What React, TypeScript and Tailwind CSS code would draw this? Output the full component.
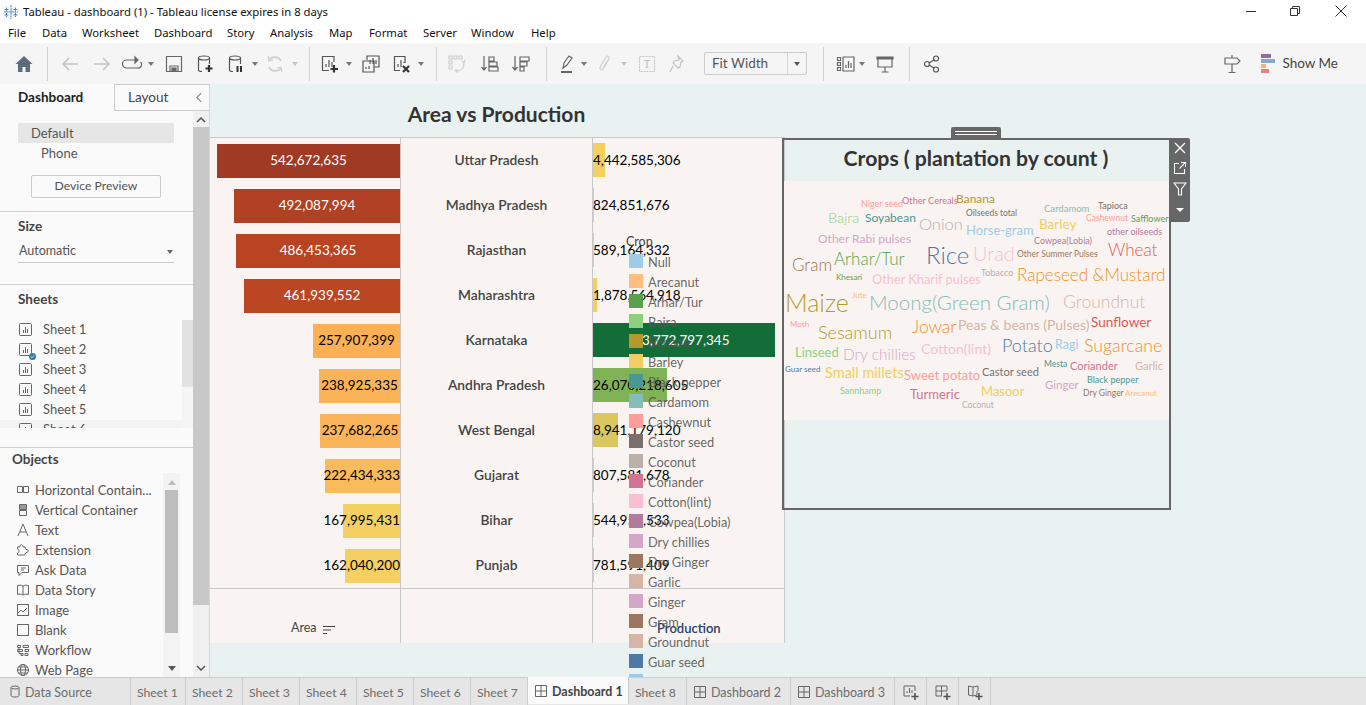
import type { ReactNode } from 'react';

const menu = [
  ['File', 'w-[34px]'],
  ['Data', 'w-[40px]'],
  ['Worksheet', 'w-[72px]'],
  ['Dashboard', 'w-[73px]'],
  ['Story', 'w-[43px]'],
  ['Analysis', 'w-[59px]'],
  ['Map', 'w-[40px]'],
  ['Format', 'w-[54px]'],
  ['Server', 'w-[48px]'],
  ['Window', 'w-[60px]'],
  ['Help', 'w-[40px]'],
];

const rows = [
  { state: 'Uttar Pradesh', area: '542,672,635', areaW: 183, areaC: 'bg-[#a03a24] text-white justify-center', prod: '4,442,585,306', prodW: 12, prodC: 'bg-[#f4d061]', prodT: 'text-black' },
  { state: 'Madhya Pradesh', area: '492,087,994', areaW: 166, areaC: 'bg-[#b14124] text-white justify-center', prod: '824,851,676', prodW: 1, prodC: 'bg-[#f4d061]', prodT: 'text-black' },
  { state: 'Rajasthan', area: '486,453,365', areaW: 164, areaC: 'bg-[#b84423] text-white justify-center', prod: '589,164,332', prodW: 1, prodC: 'bg-[#f4d061]', prodT: 'text-black' },
  { state: 'Maharashtra', area: '461,939,552', areaW: 156, areaC: 'bg-[#bb4623] text-white justify-center', prod: '1,878,564,918', prodW: 4, prodC: 'bg-[#f4d061]', prodT: 'text-black' },
  { state: 'Karnataka', area: '257,907,399', areaW: 87, areaC: 'bg-[#fbb055] text-black justify-center', prod: '3,772,797,345', prodW: 182, prodC: 'bg-[#136d39]', prodT: 'text-white pl-[49px]' },
  { state: 'Andhra Pradesh', area: '238,925,335', areaW: 81, areaC: 'bg-[#fbb357] text-black justify-center', prod: '26,070,218,605', prodW: 74, prodC: 'bg-[#7fb356]', prodT: 'text-black' },
  { state: 'West Bengal', area: '237,682,265', areaW: 80, areaC: 'bg-[#fbb459] text-black justify-center', prod: '8,941,179,120', prodW: 25, prodC: 'bg-[#dbc75f]', prodT: 'text-black' },
  { state: 'Gujarat', area: '222,434,333', areaW: 75, areaC: 'bg-[#f9bb5c] text-black justify-end', prod: '807,581,678', prodW: 1, prodC: 'bg-[#f4d061]', prodT: 'text-black' },
  { state: 'Bihar', area: '167,995,431', areaW: 57, areaC: 'bg-[#f4cf62] text-black justify-end', prod: '544,957,533', prodW: 1, prodC: 'bg-[#f4d061]', prodT: 'text-black' },
  { state: 'Punjab', area: '162,040,200', areaW: 55, areaC: 'bg-[#f4d063] text-black justify-end', prod: '781,591,409', prodW: 1, prodC: 'bg-[#f4d061]', prodT: 'text-black' },
];

const legend = [
  ['Null', 'bg-[#a0cbe8]'],
  ['Arecanut', 'bg-[#ffbe7d]'],
  ['Arhar/Tur', 'bg-[#59a14f]'],
  ['Bajra', 'bg-[#8cd17d]'],
  ['Banana', 'bg-[#b6992d]'],
  ['Barley', 'bg-[#f1ce63]'],
  ['Black pepper', 'bg-[#499894]'],
  ['Cardamom', 'bg-[#86bcb6]'],
  ['Cashewnut', 'bg-[#ff9d9a]'],
  ['Castor seed', 'bg-[#79706e]'],
  ['Coconut', 'bg-[#bab0ac]'],
  ['Coriander', 'bg-[#d37295]'],
  ['Cotton(lint)', 'bg-[#fabfd2]'],
  ['Cowpea(Lobia)', 'bg-[#b07aa1]'],
  ['Dry chillies', 'bg-[#d4a6c8]'],
  ['Dry Ginger', 'bg-[#9d7660]'],
  ['Garlic', 'bg-[#d7b5a6]'],
  ['Ginger', 'bg-[#d4a6c8]'],
  ['Gram', 'bg-[#9d7660]'],
  ['Groundnut', 'bg-[#d7b5a6]'],
  ['Guar seed', 'bg-[#4e79a7]'],
  ['', 'bg-[#a0cbe8]'],
];

const words = [
  ['Niger seed', 'left-[77px] top-[22px] text-[9px] text-[#ff9d9a]'],
  ['Other Cereals', 'left-[118px] top-[20px] text-[9.2px] text-[#d37295]'],
  ['Banana', 'left-[172px] top-[18px] text-[12px] text-[#b6992d]'],
  ['Oilseeds total', 'left-[182px] top-[32px] text-[8.5px] text-[#79706e]'],
  ['Tapioca', 'left-[314px] top-[24px] text-[9px] text-[#79706e]'],
  ['Cardamom', 'left-[260px] top-[28px] text-[9.5px] text-[#86bcb6]'],
  ['Bajra', 'left-[44px] top-[37px] text-[14.5px] font-light text-[#8cd17d]'],
  ['Soyabean', 'left-[81px] top-[37px] text-[12px] text-[#499894]'],
  ['Onion', 'left-[135px] top-[43px] text-[16.5px] font-light text-[#bab0ac]'],
  ['Horse-gram', 'left-[182px] top-[49px] text-[13px] text-[#a0cbe8]'],
  ['Barley', 'left-[255px] top-[44px] text-[13.5px] text-[#f1ce63]'],
  ['Cashewnut', 'left-[302px] top-[37px] text-[8.5px] text-[#ff9d9a]'],
  ['Safflower', 'left-[347px] top-[37px] text-[9px] text-[#59a14f]'],
  ['other oilseeds', 'left-[323px] top-[50px] text-[9px] text-[#b07aa1]'],
  ['Other Rabi pulses', 'left-[34px] top-[58px] text-[12px] text-[#d4a6c8]'],
  ['Cowpea(Lobia)', 'left-[250px] top-[59px] text-[9px] text-[#b07aa1]'],
  ['Arhar/Tur', 'left-[50px] top-[77px] text-[17px] font-light text-[#59a14f]'],
  ['Gram', 'left-[8px] top-[83px] text-[17px] font-light text-[#9d7660]'],
  ['Rice', 'left-[142px] top-[74px] text-[24px] font-light text-[#4e79a7]'],
  ['Urad', 'left-[189px] top-[72px] text-[20px] font-light text-[#fabfd2]'],
  ['Other Summer Pulses', 'left-[233px] top-[73px] text-[8.5px] text-[#9d7660]'],
  ['Wheat', 'left-[324px] top-[68px] text-[17px] font-light text-[#e15759]'],
  ['Tobacco', 'left-[197px] top-[91px] text-[9px] text-[#bab0ac]'],
  ['Rapeseed &Mustard', 'left-[233px] top-[93px] text-[17px] font-light text-[#f28e2b]'],
  ['Khesari', 'left-[52px] top-[96px] text-[8px] text-[#59a14f]'],
  ['Other Kharif pulses', 'left-[88px] top-[98px] text-[12.8px] text-[#fabfd2]'],
  ['Maize', 'left-[1px] top-[121px] text-[25px] font-light text-[#b6992d]'],
  ['Jute', 'left-[68px] top-[114px] text-[8px] text-[#ffbe7d]'],
  ['Moong(Green Gram)', 'left-[85px] top-[121px] text-[20.5px] font-light text-[#86bcb6]'],
  ['Groundnut', 'left-[279px] top-[121px] text-[17.5px] font-light text-[#d7b5a6]'],
  ['Moth', 'left-[6px] top-[143px] text-[8px] text-[#ff9d9a]'],
  ['Sesamum', 'left-[34px] top-[151px] text-[18px] font-light text-[#b6992d]'],
  ['Jowar', 'left-[128px] top-[146px] text-[17.5px] font-light text-[#f28e2b]'],
  ['Peas & beans (Pulses)', 'left-[174px] top-[144px] text-[14px] text-[#d7b5a6]'],
  ['Sunflower', 'left-[307px] top-[142px] text-[13.5px] text-[#e15759]'],
  ['Linseed', 'left-[11px] top-[171px] text-[13px] text-[#8cd17d]'],
  ['Dry chillies', 'left-[59px] top-[174px] text-[15.5px] font-light text-[#d4a6c8]'],
  ['Cotton(lint)', 'left-[137px] top-[168px] text-[14.2px] text-[#fabfd2]'],
  ['Potato', 'left-[218px] top-[164px] text-[18px] font-light text-[#4e79a7]'],
  ['Ragi', 'left-[271px] top-[164px] text-[12.5px] text-[#a0cbe8]'],
  ['Sugarcane', 'left-[300px] top-[165px] text-[17.7px] font-light text-[#f28e2b]'],
  ['Guar seed', 'left-[1px] top-[188px] text-[8px] text-[#4e79a7]'],
  ['Mesta', 'left-[260px] top-[183px] text-[8.5px] text-[#499894]'],
  ['Coriander', 'left-[286px] top-[184px] text-[11px] text-[#d37295]'],
  ['Garlic', 'left-[351px] top-[184px] text-[11px] text-[#d7b5a6]'],
  ['Small millets', 'left-[41px] top-[192px] text-[14.5px] text-[#f1ce63]'],
  ['Sweet potato', 'left-[120px] top-[194px] text-[13px] text-[#ff9d9a]'],
  ['Castor seed', 'left-[198px] top-[190px] text-[11px] text-[#79706e]'],
  ['Black pepper', 'left-[303px] top-[198px] text-[9px] text-[#499894]'],
  ['Sannhamp', 'left-[56px] top-[209px] text-[9px] text-[#8cd17d]'],
  ['Turmeric', 'left-[126px] top-[213px] text-[13px] text-[#d37295]'],
  ['Masoor', 'left-[197px] top-[210px] text-[13px] text-[#f1ce63]'],
  ['Ginger', 'left-[261px] top-[204px] text-[11.5px] text-[#d4a6c8]'],
  ['Dry Ginger', 'left-[299px] top-[212px] text-[8.5px] text-[#9d7660]'],
  ['Arecanut', 'left-[341px] top-[212px] text-[8px] text-[#ffbe7d]'],
  ['Coconut', 'left-[178px] top-[224px] text-[8.5px] text-[#bab0ac]'],
];

function Svg({ children, className = '' }: { children: ReactNode; className?: string }) {
  return (
    <svg viewBox="0 0 20 20" fill="none" stroke="currentColor" strokeWidth="1.2" className={`h-5 w-5 shrink-0 ${className}`}>
      {children}
    </svg>
  );
}

function Caret({ className }: { className: string }) {
  return <span className={`h-0 w-0 shrink-0 border-x-[3px] border-t-[4px] border-x-transparent ${className}`} />;
}

function Sep({ className }: { className: string }) {
  return <span className={`h-[34px] w-px shrink-0 bg-[#d4d4d4] ${className}`} />;
}

function ChartIcon({ className = '', check = false }: { className?: string; check?: boolean }) {
  return (
    <span className={`relative shrink-0 ${className}`}>
      <svg viewBox="0 0 14 14" fill="none" className="h-[14px] w-[14px]" stroke="#666">
        <rect x="0.5" y="0.5" width="12" height="12" rx="1" />
        <path d="M4.5 10V7M6.5 10V4M8.5 10V6" />
      </svg>
      {check && (
        <svg viewBox="0 0 7 7" className="absolute -bottom-[3px] -right-[3px] h-[7px] w-[7px]">
          <circle cx="3.5" cy="3.5" r="3.5" fill="#2f7ea8" />
          <path d="m1.800 3.500 1.200 1.200 2-2.200" fill="none" stroke="#fff" strokeWidth="0.800" />
        </svg>
      )}
    </span>
  );
}

function ObjectIcon({ name }: { name: string }) {
  const c = 'h-[14px] w-[14px] shrink-0';
  if (name === 'h') return <svg viewBox="0 0 14 14" fill="none" stroke="#666" className={c}><path d="M1.5 3.5h5v6h-5zM7.5 3.5h5v6h-5z" /></svg>;
  if (name === 'v') return <svg viewBox="0 0 14 14" fill="none" stroke="#666" className={c}><path d="M3.5 1.5h7v5h-7zM3.5 7.5h7v5h-7z" /><path d="M4 2h6v4H4z" fill="#999" stroke="none" /></svg>;
  if (name === 't') return <svg viewBox="0 0 14 14" fill="none" stroke="#666" className={c}><path d="M2 13 7 1l5 12M4 9h6" /></svg>;
  if (name === 'e') return <svg viewBox="0 0 14 14" fill="none" stroke="#666" className={c}><path d="M1.5 6V4h2.5c-.5-3 3-3 3 0H9l1 2.500c3 0 3 3 0 3l-1.500 2.500h-7V10c2 0 2-4 0-4z" /></svg>;
  if (name === 'a') return <svg viewBox="0 0 14 14" fill="none" stroke="#666" className={c}><path d="M1.500 2.500h11v7H6l-3 3v-3H1.500z" /><path d="M5 5h5M5 7h3" /></svg>;
  if (name === 'd') return <svg viewBox="0 0 14 14" fill="none" stroke="#666" className={c}><path d="M7 3C5.500 2 3.500 2 1.500 2.500v9c2-.5 4-.5 5.500.5 1.500-1 3.500-1 5.500-.5v-9C10.500 2 8.500 2 7 3zM7 3v9" /></svg>;
  if (name === 'i') return <svg viewBox="0 0 14 14" fill="none" stroke="#666" className={c}><rect x="1.500" y="1.500" width="11" height="11" /><path d="m2 10 3-3 2 2 4-4" /></svg>;
  if (name === 'b') return <svg viewBox="0 0 14 14" fill="none" stroke="#666" className={c}><rect x="1.500" y="1.500" width="11" height="11" /></svg>;
  if (name === 'w') return <svg viewBox="0 0 14 14" fill="none" stroke="#666" className={c}><path d="M1.500 2.500h3v2h-3zM7 2.500h5.500v2H7zM1.500 6.500h5v2h-5zM9 6.500h3.500v2H9zM5 10.500h2v2H5zM9 10.500h3v2H9zM3 4.500v6h2" /></svg>;
  return <svg viewBox="0 0 14 14" fill="none" stroke="#666" className={c}><circle cx="7" cy="7" r="5.500" /><ellipse cx="7" cy="7" rx="2.500" ry="5.500" /><path d="M1.500 7h11M2.500 4h9M2.500 10h9" /></svg>;
}

function TableauLogo() {
  const bars = ['M8 1v14M1 8h14', 'M3.500 3.500v4M1.500 5.500h4', 'M12.500 3.500v4M10.500 5.500h4', 'M3.500 9v4M1.500 11h4', 'M12.500 9v4M10.500 11h4'];
  return (
    <svg viewBox="0 0 16 16" fill="none" stroke="#3b7bb0" strokeWidth="1" className="mt-[2px] h-4 w-4" strokeDasharray="2 0.600">
      {bars.map((d) => <path key={d} d={d} />)}
    </svg>
  );
}

function Toolbar() {
  return (
    <div className="flex h-[41px] items-center bg-[#f5f5f5] pr-[28px]">
      <svg viewBox="0 0 20 20" className="ml-[14px] h-5 w-5 shrink-0" fill="#5d6b7c"><path d="M10 2 1.500 10H4v8h4.500v-5h3v5H16v-8h2.500z" /></svg>
      <Sep className="ml-[13px]" />
      <Svg className="ml-[12px] text-[#c4c4c4]"><path d="M18 10H3M9 4l-6 6 6 6" strokeWidth="1.500" /></Svg>
      <Svg className="ml-[12px] text-[#c4c4c4]"><path d="M2 10h15M11 4l6 6-6 6" strokeWidth="1.500" /></Svg>
      <Svg className="ml-[10px] text-[#666]"><path d="M13 6H4.500a3.500 3.500 0 0 0 0 8h11a3.500 3.500 0 0 0 3-6" /><path d="M13 3v6l3-3z" fill="currentColor" /></Svg>
      <Caret className="ml-[6px] mr-[2px] border-t-[#777]" />
      <Svg className="ml-[8px] text-[#666]"><path d="M2.500 2.500h15v15h-15zM6 17v-5h8v5" /><path d="M8 14h4v3H8z" fill="currentColor" /></Svg>
      <Svg className="ml-[11px] text-[#555]"><ellipse cx="9" cy="4" rx="5.500" ry="2" /><path d="M3.500 4v12c0 1 1.500 1.500 3.500 1.500M14.500 4v6" /><path d="M14 11v7M10.500 14.500h7" strokeWidth="2.200" stroke="#333" /></Svg>
      <Svg className="ml-[11px] text-[#555]"><ellipse cx="9" cy="4" rx="5.500" ry="2" /><path d="M3.500 4v12c0 1 1.500 1.500 3.500 1.500M14.500 4v6" /><path d="M11.500 12v6M15 12v6" strokeWidth="2" stroke="#333" /></Svg>
      <Caret className="ml-[6px] mr-[2px] border-t-[#777]" />
      <Svg className="ml-[5px] text-[#cfcfcf]"><path d="M16 7a7 7 0 0 0-12-1M4 13a7 7 0 0 0 12 1" strokeWidth="1.800" /><path d="m3 2 1 5 4-1M17 18l-1-5-4 1" /></Svg>
      <Caret className="ml-[7px] mr-[2px] border-t-[#c4c4c4]" />
      <Sep className="ml-[9px]" />
      <Svg className="ml-[10px] text-[#555]"><path d="M14 8V2.500H2.500v14H9M6 13v-3M9 13V6M12 13V8" /><path d="M14 11v7.500M10.500 15h7.500" strokeWidth="2.200" stroke="#333" /></Svg>
      <Caret className="ml-[6px] mr-[2px] border-t-[#777]" />
      <Svg className="ml-[7px] text-[#555]"><path d="M6 6V2h12v11h-5M2 7h11v11H2zM9 10V6M12 10V4M15 10V6M5 15v-2M8 15v-3" /></Svg>
      <Svg className="ml-[11px] text-[#555]"><path d="M13 9V2.500H2.500v14H8M6 13v-3M9 13V6M12 9V8" /><path d="m11 12 6 6M17 12l-6 6" strokeWidth="2.200" stroke="#333" /></Svg>
      <Caret className="ml-[6px] mr-[2px] border-t-[#777]" />
      <Sep className="ml-[10px]" />
      <Svg className="ml-[10px] text-[#cfcfcf]"><path d="M2 2h3v3H2zM7 2h3v3H7zM2 7h3v3H2zM2 12h3v3H2zM12 2h3v3h-3zM10 17c4 0 7-3 7-8M15 7l2 2 1-3M8 16l2 2v-3" /></Svg>
      <Svg className="ml-[13px] text-[#666]"><path d="M4 2v14M1.500 13 4 16l2.500-3M9 3h5v4H9zM9 8h8v4H9zM9 13h9v4H9z" /></Svg>
      <Svg className="ml-[11px] text-[#666]"><path d="M4 2v14M1.500 13 4 16l2.500-3M9 3h9v4H9zM9 8h7v4H9zM9 13h4v4H9z" /></Svg>
      <Sep className="ml-[15px]" />
      <Svg className="ml-[10px] text-[#666]"><path d="m6 14 1-5 5-7 3 2-5 7z" /><path d="M4 18h11" strokeWidth="2" /></Svg>
      <Caret className="ml-[4px] mr-[2px] border-t-[#777]" />
      <Svg className="ml-[6px] text-[#cfcfcf]"><path d="m14 5-6 10c-1 2-4 0-3-2l6-10c1-2 4-.5 3 1.500L8 14" /></Svg>
      <Caret className="ml-[6px] mr-[2px] border-t-[#c4c4c4]" />
      <Svg className="ml-[8px] text-[#c4c4c4]"><rect x="2.500" y="2.500" width="15" height="15" strokeDasharray="2 1" /><path d="M7 6.500h6M10 6.500v7M8.500 13.500h3" /></Svg>
      <Svg className="ml-[10px] text-[#c4c4c4]"><path d="m11 2 5 5-2 1-1 5-2 1-5-5 1-2 5-1zM6 12l-3 6" /></Svg>
      <div className="ml-[17px] flex h-[23px] w-[103px] shrink-0 items-center rounded-[2px] border border-[#ccc] text-[13.5px] text-[#555]">
        <span className="flex-1 pl-[7px]">Fit Width</span>
        <span className="flex h-full w-[19px] items-center justify-center border-l border-[#d8d8d8]"><Caret className="border-t-[#555]" /></span>
      </div>
      <Sep className="ml-[16px]" />
      <Svg className="ml-[12px] text-[#666]"><path d="M7 3h11v14H7zM10 14v-3M12.500 14V7M15 14V9" /><path d="M1.500 3.500h3v3h-3zM1.500 8.500h3v3h-3zM1.500 13.500h3v3h-3z" /></Svg>
      <Caret className="ml-[3px] mr-[2px] border-t-[#777]" />
      <Svg className="ml-[8px] text-[#666]"><path d="M3 4.500h14V13H3zM10 13v5M6.500 18h7" /><path d="M2 3h16v2H2z" fill="currentColor" /></Svg>
      <Sep className="ml-[14px]" />
      <Svg className="ml-[12px] text-[#555]"><circle cx="5" cy="10" r="2.500" /><circle cx="14" cy="4.500" r="2.500" /><circle cx="14" cy="15.500" r="2.500" /><path d="m7 9 5-3M7 11l5 3" /></Svg>
      <Svg className="ml-auto text-[#666]"><path d="M10 1v3M3 4h12l3 3-3 3H3zM10 10v8M6.500 18.500h7" /></Svg>
      <div className="ml-[19px] flex w-[14px] flex-col gap-[1px]">
        <span className="h-[4px] w-[10px] bg-[#8e6f9e]" />
        <span className="h-[4px] w-[14px] bg-[#83a9cc]" />
        <span className="h-[4px] w-[5px] bg-[#f5b37a]" />
        <span className="h-[4px] w-[8px] bg-[#ef7d85]" />
      </div>
      <span className="ml-[7px] text-[13.5px] text-[#444]">Show Me</span>
    </div>
  );
}

function Sidebar() {
  return (
    <aside className="relative flex w-[210px] shrink-0 flex-col overflow-hidden border-r border-[#d6d6d6] bg-[#fafafa] text-[13px] text-[#555]">
      <div className="flex h-[27px] shrink-0">
        <div className="flex w-[114px] items-center pl-[18px] text-[13.5px] font-bold text-[#222]">Dashboard</div>
        <div className="flex flex-1 items-center border-b border-l border-t border-[#ccc]">
          <span className="pl-[13px] text-[13.5px] text-[#444]">Layout</span>
          <svg viewBox="0 0 8 12" fill="none" stroke="#888" strokeWidth="1.300" className="ml-[27px] h-[11px] w-[7px]"><path d="M7 1 2 6l5 5" /></svg>
        </div>
      </div>
      <div className="flex min-h-0 flex-1">
        <div className="flex w-[193px] shrink-0 flex-col">
          <div className="h-[101px] shrink-0 border-b border-[#d0d0d0] pl-[18px] pt-[12px]">
            <div className="flex h-[20px] w-[156px] items-center bg-[#e6e6e6] pl-[13px] pt-[2px]">Default</div>
            <div className="flex h-[20px] items-center pl-[23px] pt-[2px]">Phone</div>
            <div className="ml-[13px] mt-[12px] flex h-[23px] w-[130px] items-center justify-center rounded-[2px] border border-[#ccc] text-[12.2px]">Device Preview</div>
          </div>
          <div className="h-[73px] shrink-0 border-b border-[#d0d0d0] pl-[18px] pt-[6px]">
            <div className="text-[13.5px] font-bold leading-[17px] text-[#444]">Size</div>
            <div className="mt-[5px] flex h-[23px] w-[156px] items-center justify-between border-b border-[#ccc] px-[1px] pt-[1px] text-[12.5px]">
              Automatic
              <Caret className="border-t-[#666]" />
            </div>
          </div>
          <div className="h-[163px] shrink-0 border-b border-[#d0d0d0]">
            <div className="pl-[18px] pt-[6px] text-[13.5px] font-bold leading-[17px] text-[#444]">Sheets</div>
            <div className="mt-[12px] flex h-[108px] overflow-hidden">
              <div className="flex w-[182px] shrink-0 flex-col">
                {['Sheet 1', 'Sheet 2', 'Sheet 3', 'Sheet 4', 'Sheet 5', 'Sheet 6'].map((s) => (
                  <div key={s} className="flex h-[20px] shrink-0 items-center pl-[19px] last:bg-[#f3f3f3]">
                    <ChartIcon check={s === 'Sheet 2'} />
                    <span className="ml-[10px]">{s}</span>
                  </div>
                ))}
              </div>
              <div className="flex w-[11px] flex-col bg-[#f5f5f5]">
                <div className="h-[67px] shrink-0 bg-[#e2e2e2]" />
              </div>
            </div>
          </div>
          <div className="flex min-h-0 flex-1 flex-col">
            <div className="pl-[12px] pt-[3px] text-[13.5px] font-bold leading-[17px] text-[#444]">Objects</div>
            <div className="mt-[5px] flex min-h-0 flex-1">
              <div className="flex w-[163px] shrink-0 flex-col pl-[16px] pt-[7px]">
                {[
                  ['h', 'Horizontal Contain...'],
                  ['v', 'Vertical Container'],
                  ['t', 'Text'],
                  ['e', 'Extension'],
                  ['a', 'Ask Data'],
                  ['d', 'Data Story'],
                  ['i', 'Image'],
                  ['b', 'Blank'],
                  ['w', 'Workflow'],
                  ['g', 'Web Page'],
                ].map(([icon, label]) => (
                  <div key={label} className="flex h-[20px] shrink-0 items-center whitespace-nowrap">
                    <ObjectIcon name={icon} />
                    <span className="ml-[5px] pt-[1px]">{label}</span>
                  </div>
                ))}
              </div>
              <div className="flex w-[17px] shrink-0 flex-col items-center bg-[#f3f3f3]">
                <span className="mt-[7px] h-0 w-0 border-x-[4px] border-b-[5px] border-x-transparent border-b-[#bbb]" />
                <div className="mt-[5px] h-[143px] w-[13px] bg-[#bdbdbd]" />
                <span className="mt-auto mb-[6px] h-0 w-0 border-x-[4px] border-t-[5px] border-x-transparent border-t-[#555]" />
              </div>
            </div>
          </div>
        </div>
        <div className="flex w-[16px] flex-col items-center bg-[#f0f0f0]">
          <svg viewBox="0 0 10 6" fill="none" stroke="#555" strokeWidth="1.500" className="mt-[6px] h-[6px] w-[10px]"><path d="m1 5 4-4 4 4" /></svg>
          <div className="mt-[4px] h-[478px] w-full bg-[#c8c8c8]" />
          <svg viewBox="0 0 10 6" fill="none" stroke="#555" strokeWidth="1.500" className="mt-auto mb-[6px] h-[6px] w-[10px]"><path d="m1 1 4 4 4-4" /></svg>
        </div>
      </div>
    </aside>
  );
}

function Chart() {
  return (
    <div className="flex w-[575px] flex-col">
      <div className="flex h-[53px] items-center justify-center pr-[2px] pt-[6px] text-[21px] font-bold text-[#333]">Area vs Production</div>
      <div className="h-[506px] border-r border-t border-[#c9c9c9] bg-[#f9f4f1]">
        <div className="flex h-[451px] border-b border-[#c9c9c9]">
          <div className="w-[191px] border-r border-[#c9c9c9]">
            {rows.map((r) => (
              <div key={r.state} className="flex h-[45px] items-center justify-end">
                <div className={`flex h-[34px] items-center whitespace-nowrap text-[13.5px] ${r.areaC}`} style={{ width: r.areaW }}>
                  {r.area}
                </div>
              </div>
            ))}
          </div>
          <div className="w-[192px] border-r border-[#c9c9c9]">
            {rows.map((r) => (
              <div key={r.state} className="flex h-[45px] items-center justify-center text-[13.8px] font-semibold text-[#444]">{r.state}</div>
            ))}
          </div>
          <div className="min-w-0 flex-1 overflow-hidden">
            {rows.map((r) => (
              <div key={r.state} className="relative flex h-[45px] items-center">
                <div className={`absolute left-0 top-[5px] h-[34px] ${r.prodC}`} style={{ width: r.prodW }} />
                <span className={`relative whitespace-nowrap text-[13.5px] ${r.prodT}`}>{r.prod}</span>
              </div>
            ))}
          </div>
        </div>
        <div className="flex h-[54px] text-[#444]">
          <div className="flex w-[191px] items-end justify-start border-r border-[#c9c9c9] pb-[5px] pl-[81px] text-[12.5px]">
            Area
            <svg viewBox="0 0 12 10" fill="none" stroke="#444" strokeWidth="1.200" className="mb-[3px] ml-[6px] h-[10px] w-[12px]"><path d="M0 1.500h12M0 5h8M0 8.500h4" /></svg>
          </div>
          <div className="w-[192px] border-r border-[#c9c9c9]" />
          <div className="flex flex-1 items-end pb-[5px] pl-[64px] text-[13px] font-semibold text-[#2a3f66]">Production</div>
        </div>
      </div>
    </div>
  );
}

function Legend() {
  return (
    <div className="absolute left-[416px] top-[149px] flex flex-col">
      <div className="h-[18px] text-[12.5px] leading-[18px] text-[#444]">Crop</div>
      <div className="flex flex-col pl-[3px]">
        {legend.map(([label, color], i) => (
          <div key={i} className="flex h-[20px] items-center">
            <span className={`h-[14px] w-[14px] shrink-0 ${color}`} />
            <span className="ml-[5px] whitespace-nowrap pt-[3px] text-[12.8px] text-[#555]/90">{label}</span>
          </div>
        ))}
      </div>
    </div>
  );
}

function WordCloud() {
  return (
    <div className="absolute left-[572px] top-[54px] h-[372px] w-[389px] border-2 border-[#666]">
      <div className="flex h-[41px] items-center justify-center pb-[3px] pr-[1px] text-[21.2px] font-bold text-[#333]">Crops ( plantation by count )</div>
      <div className="relative h-[239px] bg-[#f9f4f1]">
        {words.map(([word, cls]) => (
          <span key={word} className={`absolute -translate-y-1/2 whitespace-nowrap leading-none ${cls}`}>{word}</span>
        ))}
      </div>
      <div className="absolute -top-[13px] left-[167px] flex h-[11px] w-[50px] flex-col items-center justify-center gap-[2px] rounded-t-[2px] bg-[#666]">
        <span className="h-px w-[42px] bg-white" />
        <span className="h-px w-[42px] bg-white" />
      </div>
      <div className="absolute -right-[21px] -top-[2px] flex h-[84px] w-[21px] flex-col items-center rounded-r-[2px] bg-[#666] text-white">
        <svg viewBox="0 0 12 12" stroke="currentColor" strokeWidth="1.300" className="mt-[4px] h-[12px] w-[12px]"><path d="m1 1 10 10M11 1 1 11" /></svg>
        <svg viewBox="0 0 12 12" fill="none" stroke="currentColor" strokeWidth="1.100" className="mt-[8px] h-[12px] w-[12px]"><path d="M10.500 7v4.500h-10v-10H5M7 .5h4.500V5M11.500.5 5.500 6.500" /></svg>
        <svg viewBox="0 0 14 14" fill="none" stroke="currentColor" strokeWidth="1.100" className="mt-[8px] h-[14px] w-[14px]"><path d="M1 1h12L8.500 7v6h-3V7z" /></svg>
        <span className="mt-[12px] h-0 w-0 border-x-[4px] border-t-[4px] border-x-transparent border-t-white" />
      </div>
    </div>
  );
}

function TabBar() {
  const tabs = [
    ['Sheet 1', 'w-[55px]'],
    ['Sheet 2', 'w-[57px]'],
    ['Sheet 3', 'w-[57px]'],
    ['Sheet 4', 'w-[57px]'],
    ['Sheet 5', 'w-[57px]'],
    ['Sheet 6', 'w-[57px]'],
    ['Sheet 7', 'w-[57px]'],
  ];
  const dashIcon = (
    <svg viewBox="0 0 12 12" fill="none" stroke="#666" className="mr-[5px] h-[12px] w-[12px] shrink-0"><path d="M.5.5h11v11H.5zM6 .5v11M.5 6h11" /></svg>
  );
  return (
    <div className="flex h-[28px] shrink-0 border-t border-[#ccc] bg-[#e6e6e6] text-[12.5px] text-[#6d6d6d]">
      <div className="flex w-[131px] items-center border-r border-[#ccc] pl-[10px]">
        <svg viewBox="0 0 10 13" fill="none" stroke="#666" className="mr-[5px] h-[13px] w-[10px]"><ellipse cx="5" cy="2.500" rx="4" ry="1.500" /><path d="M1 2.500v8c0 2 8 2 8 0v-8" /></svg>
        <span className="pt-[3px]">Data Source</span>
      </div>
      {tabs.map(([t, w]) => (
        <div key={t} className={`flex items-center border-r border-[#ccc] pl-[6px] pt-[3px] text-[12.2px] ${w}`}>{t}</div>
      ))}
      <div className="flex w-[101px] -translate-y-px items-center border-r border-[#ccc] bg-[#fafafa] pl-[7px] font-bold text-[#444]">
        {dashIcon}
        <span className="pt-[4px]">Dashboard 1</span>
      </div>
      <div className="flex w-[58px] items-center border-r border-[#ccc] pl-[6px] pt-[3px] text-[12.2px]">Sheet 8</div>
      <div className="flex w-[104px] items-center border-r border-[#ccc] pl-[7px]">{dashIcon}<span className="pt-[3px]">Dashboard 2</span></div>
      <div className="flex w-[104px] items-center border-r border-[#ccc] pl-[7px]">{dashIcon}<span className="pt-[3px]">Dashboard 3</span></div>
      <div className="flex w-[32px] items-center justify-center border-r border-[#ccc]">
        <svg viewBox="0 0 16 16" fill="none" stroke="#666" className="h-4 w-4"><path d="M12 7V2H1v10h6M4 9V7M6.500 9V4M9 9V6" /><path d="M12 9v7M8.500 12.500h7" stroke="#555" strokeWidth="1.600" /></svg>
      </div>
      <div className="flex w-[32px] items-center justify-center border-r border-[#ccc]">
        <svg viewBox="0 0 16 16" fill="none" stroke="#666" className="h-4 w-4"><path d="M12 7V2H1v10h6M6.500 2v10M1 7h11" /><path d="M12 9v7M8.500 12.500h7" stroke="#555" strokeWidth="1.600" /></svg>
      </div>
      <div className="flex w-[32px] items-center justify-center border-r border-[#ccc]">
        <svg viewBox="0 0 16 16" fill="none" stroke="#666" className="h-4 w-4"><path d="M6 3 1.500 2v9L6 12l4-1V7M6 3l5-1v5M6 3v9" /><path d="M12 9v7M8.500 12.500h7" stroke="#555" strokeWidth="1.600" /></svg>
      </div>
    </div>
  );
}

export default function App() {
  return (
    <div className="flex h-[705px] w-[1366px] flex-col overflow-hidden bg-white font-['Lato',sans-serif]">
      <div className="flex h-[22px] shrink-0 items-center pl-[3px] pr-[19px] font-['Noto_Sans',sans-serif] text-[11.3px] text-[#111]">
        <TableauLogo />
        <span className="ml-[4px] pt-[3px]">Tableau - dashboard (1) - Tableau license expires in 8 days</span>
        <span className="ml-auto h-px w-[10px] bg-[#333]" />
        <svg viewBox="0 0 10 10" fill="none" stroke="#333" className="ml-[34px] h-[10px] w-[10px]"><path d="M.5 2.500h7v7h-7zM2.500 2.500v-2h7v7h-2" /></svg>
        <svg viewBox="0 0 12 12" fill="none" stroke="#333" className="ml-[35px] h-[12px] w-[12px]"><path d="m.5.5 11 11M11.500.5l-11 11" /></svg>
      </div>
      <div className="flex h-[21px] shrink-0 items-center pl-[8px] pt-[1px] font-['Noto_Sans',sans-serif] text-[11.3px] text-[#111]">
        {menu.map(([label, w]) => (
          <span key={label} className={w}>{label}</span>
        ))}
      </div>
      <Toolbar />
      <div className="flex min-h-0 flex-1">
        <Sidebar />
        <main className="relative min-w-0 flex-1 overflow-hidden bg-[#e9f2f0]">
          <Chart />
          <Legend />
          <WordCloud />
        </main>
      </div>
      <TabBar />
    </div>
  );
}
